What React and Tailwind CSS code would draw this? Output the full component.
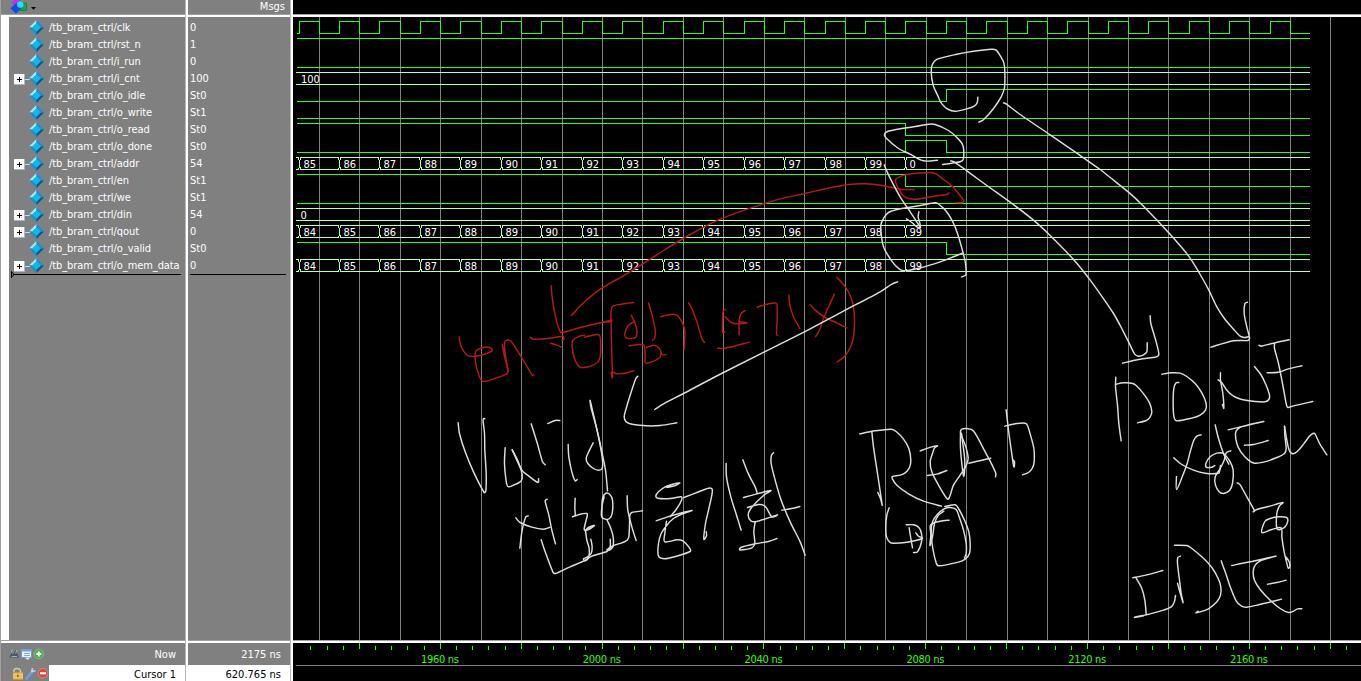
import React from "react";

const signals = [
  { name: "clk", value: "0" },
  { name: "rst_n", value: "1" },
  { name: "i_run", value: "0" },
  { name: "i_cnt", value: "100", bus: true },
  { name: "o_idle", value: "St0" },
  { name: "o_write", value: "St1" },
  { name: "o_read", value: "St0" },
  { name: "o_done", value: "St0" },
  { name: "addr", value: "54", bus: true },
  { name: "en", value: "St1" },
  { name: "we", value: "St1" },
  { name: "din", value: "54", bus: true },
  { name: "qout", value: "0", bus: true },
  { name: "o_valid", value: "St0" },
  { name: "o_mem_data", value: "0", bus: true },
];

// Falling clock edges (also the grid) and rising clock edges, in pixels.
const falls = [319, 359, 400, 440, 481, 521, 562, 602, 642, 683, 723, 764, 804, 845, 885, 926, 966, 1007, 1047, 1088, 1128, 1168, 1209, 1249, 1290, 1330];
const rises = [299, 339, 379, 420, 460, 501, 541, 582, 622, 663, 703, 744, 784, 825, 865, 905, 946, 986, 1027, 1067, 1108, 1148, 1189, 1229, 1270];
const END = 1310;

const clockPath = () => {
  let d = "M297 33.5";
  rises.forEach((r, i) => {
    d += `H${r + 0.5}V21.5H${falls[i] + 0.5}V33.5`;
  });
  return d + `H${END}`;
};

const levels = [
  "M297 38.5H1310",
  "M297 67.5H1310",
  "M297 101.5H946.5V89.5H1310",
  "M297 118.5H1310",
  "M297 123.5H905.5V135.5H1310",
  "M297 152.5H905.5V140.5H946.5V152.5H1310",
  "M297 174.5H905.5V186.5H1310",
  "M297 203.5H1310",
  "M297 242.5H946.5V254.5H1310",
];

const busPath = (y, changes) => {
  const t = y + 0.5;
  const b = y + 12.5;
  let d = "";
  let x = 296;
  changes.forEach((c) => {
    d += `M${x} ${t}H${c - 0.5}V${t + 2}M${x} ${b}H${c - 0.5}V${b - 2}M${c + 0.5} ${t + 2}V${b - 2}M${c + 1.5} ${t + 2.5}V${t}M${c + 1.5} ${b - 2.5}V${b}`;
    x = c + 1;
  });
  return d + `M${x} ${t}H${END}M${x} ${b}H${END}`;
};

const changes16 = rises.slice(0, 16);
const buses = [
  { y: 72, changes: [], labels: [[301, "100"]] },
  { y: 157, changes: changes16, labels: changes16.map((x, i) => [x + 4.4, i === 15 ? "0" : String(85 + i)]) },
  { y: 208, changes: [], labels: [[300.5, "0"]] },
  { y: 225, changes: changes16, labels: changes16.map((x, i) => [x + 4.4, String(84 + i)]) },
  { y: 259, changes: changes16, labels: changes16.map((x, i) => [x + 4.4, String(84 + i)]) },
];

// Pen strokes: each group has an origin and point lists in thirds of a pixel.
const white = [
  { o: [800, 0], s: [
    [533,291, 531,308, 522,318, 500,326, 465,333, 445,328, 425,311, 412,285, 399,255, 393,215, 397,192, 411,177, 470,162, 520,153, 575,147, 588,150, 601,168, 611,188, 614,215, 613,262, 603,290, 580,325, 550,359, 536,366],
    [610,308, 618,311, 660,343, 750,404, 830,459, 900,508, 930,532, 985,576, 1030,618, 1105,697, 1165,767, 1200,823, 1226,870, 1250,920, 1275,958, 1300,987, 1320,1008, 1332,1012, 1345,1010],
    [427,493, 455,489, 482,484, 490,475, 488,435, 470,412, 445,391, 405,373, 385,372, 345,379, 300,386, 262,394, 253,402, 257,413, 295,445, 330,462, 370,482, 412,480],
    [452,482, 462,485, 500,512, 560,556, 630,606, 700,660, 750,706, 820,778, 865,833, 892,870, 940,940, 970,995, 990,1035, 1003,1061, 1015,1068, 1030,1064, 1040,1055, 1041,1028],
    [252,494, 268,530, 300,590, 330,635, 361,682],
    [319,656, 335,667, 350,680, 361,682, 358,665, 354,650, 356,635],
    [484,830, 497,824, 496,790, 488,755, 472,700, 458,665, 437,632, 413,610, 403,608, 360,616, 300,626, 265,637, 250,655, 242,675, 244,710, 250,740, 265,768, 285,795, 310,812, 360,803, 420,785, 462,769, 487,759],
    [292,845, 275,852, 240,875, 120,938, 13,995, -230,1117, -350,1180, -405,1208, -436,1228],
  ]},
  { o: [440, 270], s: [
    [593,318, 587,325, 570,375, 558,415, 552,440, 558,455, 580,463, 620,467, 660,466, 710,458],
    [54,458, 58,490, 75,545, 100,605, 132,667, 137,662, 138,610, 134,540, 133,490, 129,455, 130,445, 134,446],
    [195,533, 193,580, 197,625, 203,649, 220,645, 239,636, 246,625, 243,600, 230,570, 216,539],
    [216,539, 230,565, 245,600, 265,617, 293,637, 295,626],
    [273,461, 290,515, 307,575, 315,584],
    [323,460, 345,451, 359,451],
    [384,523, 386,560, 395,605, 405,632, 411,628],
    [459,518, 448,540, 438,565, 443,580, 460,595, 475,600, 486,595, 487,570, 480,525, 465,455, 450,391],
    [450,391, 452,410, 472,485, 485,545, 496,600, 502,662],
    [227,743, 240,757, 275,771, 310,777, 330,771],
    [264,737, 257,740, 246,780, 239,834],
    [321,687, 315,693, 326,735, 335,780, 346,821],
    [405,684, 404,715, 405,735, 397,740, 420,732, 440,730, 441,738, 432,778, 445,778, 463,766, 445,772, 435,782],
    [485,710, 487,685, 496,670, 509,673, 517,690, 516,730, 508,745, 495,747, 484,738, 486,705, 492,680],
    [500,748, 512,775, 519,800, 519,828, 511,838, 500,839, 510,830, 510,807],
    [436,780, 440,810, 447,835, 446,860, 436,872, 430,866, 442,860, 453,850, 456,830, 452,807],
    [303,809, 315,845, 338,905, 346,910, 390,890, 432,872, 455,858, 500,844, 516,828, 545,818, 560,811, 566,800, 568,765, 569,735, 575,727, 607,722],
    [561,677, 563,720, 575,770, 588,811],
  ]},
  { o: [640, 270], s: [
    [80,652, 95,643, 119,638, 100,648, 80,651, 100,642, 75,650, 55,665, 47,677, 53,684, 90,685, 123,680, 124,690, 110,715, 90,740],
    [48,752, 90,738, 155,721, 125,732, 100,745, 80,765, 63,790, 55,820, 54,855, 62,864, 85,864, 150,844, 148,833, 128,812, 110,809, 74,815, 74,790, 79,753],
    [131,682, 165,669, 205,654, 216,657, 215,675, 205,720, 196,760, 191,807, 199,797, 198,785],
    [258,580, 259,620, 272,680, 290,738, 303,780],
    [308,569, 325,612, 345,650, 351,669],
    [310,682, 350,671, 392,661, 375,672, 350,695, 330,718, 324,735, 332,752, 350,754, 411,734, 395,740, 375,708, 355,703, 322,712],
    [345,755, 341,785, 344,820, 335,833, 315,838, 299,839, 302,832, 345,821, 385,814, 410,805],
    [400,548, 394,555, 393,580, 405,630, 423,690, 450,755, 480,815, 495,855],
    [425,720, 450,716, 479,709],
  ]},
  { o: [850, 380], s: [
    [29,161, 75,152, 123,147, 138,154, 160,177, 176,205, 182,240, 178,262, 165,278, 150,285, 127,289, 127,297, 140,315, 175,341, 220,363, 274,378],
    [65,154, 70,200, 82,280, 96,374, 91,355, 83,337],
    [210,212, 235,203, 262,197, 253,203, 247,220, 240,245, 245,275, 265,315, 292,357, 300,345, 310,315, 330,285, 347,258, 354,235, 347,200, 335,170, 331,155, 335,147, 350,145, 367,150, 380,168, 405,215, 426,255, 437,280, 436,290],
    [232,286, 260,282, 290,271],
    [331,155, 331,205, 336,260, 341,288, 344,245, 338,190, 334,160],
    [356,249, 395,240, 422,234],
    [468,89, 475,150, 484,215, 491,260, 493,245, 487,238],
    [464,138, 500,130, 525,129, 532,136, 541,165, 551,205, 552,245, 546,265, 535,277, 517,284],
    [117,383, 110,405, 107,440, 109,470, 119,486, 130,489, 170,486, 216,475, 205,468, 197,458],
    [168,434, 190,434, 206,442, 214,460, 214,485, 202,515, 190,517],
    [177,443, 182,475, 187,503],
    [284,379, 315,374, 325,385, 343,420, 356,455, 360,490, 358,520, 345,537, 325,546, 265,557, 257,545, 248,505, 243,460, 247,425, 262,402, 282,386, 300,382, 318,388, 327,410, 340,450, 348,490, 348,520, 343,533],
    [297,420, 270,423, 247,430, 240,438, 242,465, 239,496, 247,470, 253,430, 265,405, 281,393],
  ]},
  { o: [1100, 290], s: [
    [150,77, 152,100, 168,155, 176,190, 174,197, 165,201, 115,208, 67,219],
    [442,36, 434,41, 432,70, 440,110, 448,143, 443,151, 400,152, 332,171],
    [47,261, 46,290, 52,345, 56,400, 63,452],
    [48,282, 70,278, 95,279, 108,286, 128,308, 148,338, 155,365, 150,380, 138,391, 112,398],
    [185,252, 215,248, 240,249, 260,259, 285,280, 305,308, 318,340, 316,360, 300,375, 275,384, 229,392, 221,378, 219,335, 221,295, 228,278, 236,277],
    [361,248, 361,270, 368,310, 371,354, 367,343],
    [354,269, 365,278, 380,300, 400,318, 425,328, 465,334, 495,335, 506,328, 508,315, 497,283, 482,253, 463,229],
    [476,165, 483,168, 520,159, 567,149],
    [523,160, 523,175, 535,220, 547,280, 558,340, 563,352, 580,347, 638,334],
    [501,248, 535,246, 565,236, 605,227],
    [384,419, 430,408, 491,394, 430,408, 412,417, 406,430, 410,460, 422,485, 445,510, 462,519, 490,516, 530,502, 553,490, 558,475, 554,435, 553,408],
    [433,465, 460,463, 504,451],
    [553,408, 560,450, 567,480, 578,491, 592,483, 610,462, 627,439, 638,430, 645,432, 660,463, 680,494],
    [303,434, 291,437, 281,450, 270,485, 261,520, 245,563, 229,598, 229,559],
    [221,503, 245,523, 280,540, 315,549, 355,549, 359,540, 361,526],
    [345,404, 355,445, 370,490, 386,522],
    [344,526, 335,531, 318,531, 318,518, 330,500, 350,489, 370,490, 390,515, 399,540, 397,580, 388,601, 370,610, 357,605, 346,585, 345,560, 360,535, 372,510, 378,488, 392,482],
  ]},
  { o: [1100, 440], s: [
    [411,128, 420,134, 440,170, 463,212, 459,215, 470,208, 505,199, 548,187, 538,197, 530,220, 530,265, 540,268, 555,260, 563,242, 559,232, 535,230, 510,235, 494,244, 485,277, 515,268, 543,263, 545,290, 552,335, 559,365, 564,384, 569,380, 567,365, 557,350],
    [98,413, 140,404, 188,391],
    [108,414, 125,445, 134,480, 138,521],
    [103,532, 130,527, 104,531, 150,521, 190,510, 212,501, 222,487, 226,466],
    [241,348, 233,352, 232,370, 238,420, 243,460, 249,488, 241,462, 232,429],
    [223,315, 260,316, 275,325, 305,350, 335,382, 354,415, 362,440, 361,465, 350,485, 325,506, 288,518, 294,513],
    [363,362, 375,395, 392,445, 408,482, 424,498, 440,501, 475,494, 544,477],
    [395,376, 450,365, 527,348, 485,360, 465,375, 459,395, 463,420, 480,448, 510,480, 540,505, 565,517, 580,513, 592,506, 605,506],
    [502,432, 530,427, 558,420],
  ]},
];

const red = [
  { o: [800, 0], s: [
    [342,568, 300,567, 260,559, 220,552, 180,551, 130,555, 80,565, 0,583, -60,596, -120,614, -240,657, -330,703, -405,748, -502,810, -550,838, -600,867, -650,908, -686,946],
    [447,578, 440,583, 410,587, 350,597, 325,595, 308,585, 295,565, 286,545, 288,536, 305,527, 340,520, 375,518, 403,519, 430,538, 457,559, 475,580, 491,602, 486,607, 466,608],
    [110,831, 135,860, 150,885, 160,920, 163,965, 160,1010, 153,1035, 135,1067, 111,1085],
  ]},
  { o: [440, 270], s: [
    [57,200, 60,220, 70,243, 85,257, 110,258, 140,250, 156,241, 151,233, 135,231, 115,237, 106,245, 106,275, 113,305, 127,333, 160,326, 200,311, 203,300, 192,255, 186,222, 193,255, 205,302, 198,270, 193,230, 195,213, 207,210, 217,219, 245,263, 277,316, 281,314],
    [333,47, 337,90, 346,140, 358,180, 367,187, 420,172, 514,150, 485,157, 514,154],
    [270,201, 280,207, 325,205, 367,198, 371,207, 365,211],
    [331,219, 350,225, 365,231],
    [433,195, 415,199, 398,210, 396,230, 403,265, 418,290, 440,291, 463,283, 478,268, 482,235, 479,197, 470,193, 433,201],
    [581,97, 545,102, 515,112, 513,160, 514,220, 517,322, 514,305, 530,311, 555,309, 581,302],
    [573,135, 583,155, 590,180, 588,200, 575,205, 557,202, 554,190, 562,169, 575,158, 584,155],
    [625,98, 637,140, 645,180, 644,203, 637,210],
    [567,227, 600,223, 612,226, 615,250, 615,277, 625,278, 655,265, 663,250, 656,233, 640,225, 619,232],
    [663,248, 668,254, 677,253],
  ]},
  { o: [640, 270], s: [
    [61,140, 90,133, 110,135, 125,155, 134,180, 132,238],
    [145,98, 155,115, 170,155, 185,205, 193,217],
    [256,118, 249,122, 247,155, 247,187, 254,185],
    [255,140, 270,155, 290,161, 320,158, 298,155],
    [315,121, 303,130, 297,150, 297,194],
    [233,234, 255,234, 328,216],
    [351,111, 380,102, 408,99, 411,110, 411,145, 409,193, 413,196],
    [446,75, 449,105, 460,140, 479,175],
    [510,103, 525,120, 555,142, 590,158, 620,173],
    [583,72, 572,95, 550,145, 538,180, 526,200],
  ]},
];

// Smooths a flat list of points into cubic segments.
const smooth = ([ox, oy], p) => {
  const n = p.length / 2;
  const at = (i) => {
    const k = Math.max(0, Math.min(n - 1, i));
    return [ox + (p[2 * k] + 0.5) / 3, oy + (p[2 * k + 1] + 0.5) / 3];
  };
  const f = (v) => v.toFixed(2);
  let d = `M${f(at(0)[0])} ${f(at(0)[1])}`;
  for (let i = 0; i < n - 1; i++) {
    const a = at(i - 1), b = at(i), c = at(i + 1), e = at(i + 2);
    const len = Math.hypot(c[0] - b[0], c[1] - b[1]);
    const t1 = Math.hypot(c[0] - a[0], c[1] - a[1]) || 1;
    const t2 = Math.hypot(e[0] - b[0], e[1] - b[1]) || 1;
    const k1 = Math.min(1 / 6, (len * 0.35) / t1);
    const k2 = Math.min(1 / 6, (len * 0.35) / t2);
    d += `C${f(b[0] + (c[0] - a[0]) * k1)} ${f(b[1] + (c[1] - a[1]) * k1)} ${f(c[0] - (e[0] - b[0]) * k2)} ${f(c[1] - (e[1] - b[1]) * k2)} ${f(c[0])} ${f(c[1])}`;
  }
  return d;
};

const Ink = ({ groups, color }) => (
  <g fill="none" stroke={color} strokeWidth="1.45" strokeLinecap="round" strokeLinejoin="round">
    {groups.flatMap((g, i) => g.s.map((p, j) => <path key={`${i}-${j}`} d={smooth(g.o, p)} />))}
  </g>
);

const Waves = () => (
  <svg className="block h-[623px] w-[1068px]" viewBox="293 17 1068 623">
    <g fill="#808080" shapeRendering="crispEdges">
      {falls.map((x) => <rect key={x} x={x} y="17" width="1" height="623" />)}
    </g>
    <g fill="none" stroke="#33ff00" shapeRendering="crispEdges">
      <path d={clockPath()} />
      {levels.map((d) => <path key={d} d={d} />)}
    </g>
    {buses.map((b) => (
      <g key={b.y}>
        <path d={busPath(b.y, b.changes)} fill="none" stroke="#b3ffb3" shapeRendering="crispEdges" />
        {b.labels.map(([x, t]) => (
          <text key={x} x={x} y={b.y + 11} fill="#ffffff" fontSize="11" fontFamily="'DejaVu Sans Condensed', 'DejaVu Sans', sans-serif">{t}</text>
        ))}
      </g>
    ))}
    <Ink groups={red} color="#b51a17" />
    <Ink groups={white} color="#dedede" />
  </svg>
);

const Ruler = () => {
  const ticks = [];
  for (let k = -3; k <= 62; k++) ticks.push(k);
  return (
    <svg className="block h-[38px] w-[1068px]" viewBox="293 643 1068 38">
      <g fill="#33ff00" shapeRendering="crispEdges">
        {ticks.map((k) => {
          const major = k % 5 === 0;
          return <rect key={k} x={Math.floor(359.4 + k * 16.18)} y={major ? 643 : 646} width="1" height={major ? 6 : 4} />;
        })}
      </g>
      <rect x="296" y="665" width="1065" height="1" fill="#808080" />
      {[1960, 2000, 2040, 2080, 2120, 2160].map((t, i) => (
        <text key={t} x={440 + i * 161.8} y="663" textAnchor="middle" textLength="38" fill="#33ff00" fontSize="11" fontFamily="'DejaVu Sans Condensed', 'DejaVu Sans', sans-serif">{t} ns</text>
      ))}
    </svg>
  );
};

const Diamond = () => (
  <svg className="block h-[15px] w-[15px]" viewBox="0 0 15 15">
    <path d="M7.5 0L0 7.5L3.5 7.5L7.5 3.5Z" fill="#a9e6fa" />
    <path d="M7.5 0L15 7.5L11.5 7.5L7.5 3.5Z" fill="#1c8fd0" />
    <path d="M0 7.5L7.5 15L7.5 11.5L3.5 7.5Z" fill="#1690d6" />
    <path d="M15 7.5L7.5 15L7.5 11.5L11.5 7.5Z" fill="#045a86" />
    <path d="M7.5 3.2L11.8 7.5L7.5 11.8L3.2 7.5Z" fill="#00bdf2" />
  </svg>
);

const Expander = () => (
  <svg className="block h-[11px] w-4" viewBox="0 0 16 11" shapeRendering="crispEdges">
    <rect x="11" y="5" width="5" height="1" fill="#d0d8dc" />
    <rect x="0" y="0" width="11" height="11" fill="#a5b4cf" />
    <rect x="0" y="0" width="10" height="10" fill="#ffffff" />
    <rect x="3" y="5" width="5" height="1" fill="#000" />
    <rect x="5" y="3" width="1" height="5" fill="#000" />
  </svg>
);

const HeaderIcon = () => (
  <svg className="block h-[14px] w-[28px]" viewBox="10 0 28 14">
    <path d="M11.5 3L14.5 0H21L15 5Z" fill="#c42fe0" />
    <rect x="20" y="3" width="6.5" height="7.5" fill="#17a34a" stroke="#0a6b2c" strokeWidth=".6" />
    <path d="M16 3L21.5 8.2L16 13.8L10.5 8.2Z" fill="#0a4fe6" />
    <circle cx="20.3" cy="4.6" r="3.2" fill="#22e0f5" />
    <path d="M31 7H36L33.5 9.8Z" fill="#000" />
  </svg>
);

const NowIcons = () => (
  <svg className="block h-[12px] w-[36px]" viewBox="9 648 36 12">
    <path d="M9.5 657.5L11.5 652.5L13 655L15.5 650L19 657.5Z" fill="#44586c" />
    <path d="M11 652.5L12.5 649.5M15.5 653.5L17 650M11.5 656.5H17" stroke="#b9c6d2" fill="none" strokeWidth=".8" />
    <rect x="21.5" y="649.5" width="10" height="8" fill="#e9f2fb" stroke="#6c9bd2" />
    <rect x="21" y="649" width="11" height="2.5" fill="#72a5df" />
    <path d="M24 653.5H30M24 655.5H30" stroke="#8bacd2" />
    <path d="M25 658L28 660L30 657Z" fill="#dbe8f5" />
    <circle cx="38.8" cy="654" r="4.7" fill="#48b042" stroke="#8ed384" strokeWidth=".6" />
    <path d="M36.3 654H41.3M38.8 651.5V656.5" stroke="#fff" strokeWidth="1.8" />
  </svg>
);

const CursorIcons = () => (
  <svg className="block h-[13px] w-[37px]" viewBox="11 667 37 13">
    <path d="M14 672V670.5C14 668.3 19.5 667.3 20.5 670.5V673" fill="none" stroke="#dccb93" strokeWidth="1.4" />
    <rect x="13" y="672.5" width="10" height="7" fill="#edb246" />
    <path d="M13 674.5H23M13 677H23" stroke="#f7d993" strokeWidth=".8" />
    <rect x="17" y="674.5" width="1.5" height="2.5" fill="#8a6420" />
    <path d="M26.5 678.5L32.5 671.5" stroke="#6c9ce2" strokeWidth="2.8" strokeLinecap="round" />
    <path d="M32.5 668L31.8 671.5L35.5 670.8" fill="none" stroke="#bdd3f0" strokeWidth="1.6" />
    <circle cx="43" cy="673.2" r="4.8" fill="#e0453d" stroke="#f09a92" strokeWidth=".6" />
    <rect x="40" y="672.3" width="6" height="2" fill="#fff" />
  </svg>
);

const HRule = () => (
  <div className="h-[3px] shrink-0 border-t border-[#a0a0a0] bg-white" />
);

const VRule = () => (
  <div className="h-full w-[3px] shrink-0 border-l border-[#b8b8b8] bg-white" />
);

export default function App() {
  return (
    <div className="flex h-[681px] w-[1361px] overflow-hidden bg-[#808080] font-['DejaVu_Sans_Condensed','DejaVu_Sans',sans-serif] text-[11px] leading-[17px] text-white">
      <div className="w-px shrink-0 bg-[#a0a0a0]" />
      <div className="flex w-[184px] shrink-0 flex-col">
        <div className="h-[14px] pl-[9px]"><HeaderIcon /></div>
        <HRule />
        <div className="flex h-[623px]">
          <div className="w-2 shrink-0 bg-white" />
          <div className="flex grow flex-col pt-[2px]">
            {signals.map((s) => (
              <div key={s.name} className="flex h-[17px] items-center whitespace-nowrap">
                <div className="ml-[5px] w-4 pt-[2px]">{s.bus && <Expander />}</div>
                <div className="-ml-px"><Diamond /></div>
                <span className="ml-[5px] tracking-[-0.08px]">/tb_bram_ctrl/{s.name}</span>
              </div>
            ))}
            <svg className="-mt-[3px] ml-[2px] block h-2 w-[170px] overflow-visible" viewBox="11 271 170 8">
              <path d="M11.5 271.5V277.5L14 274.5Z" fill="none" stroke="#000" />
              <rect x="13" y="274" width="168" height="1" fill="#000" />
            </svg>
          </div>
        </div>
        <HRule />
        <div className="flex h-[22px] items-center justify-between pl-2 pr-[9px]">
          <NowIcons />
          <span>Now</span>
        </div>
        <div className="flex h-4 items-center">
          <div className="flex h-4 w-12 shrink-0 items-center pl-[10px]"><CursorIcons /></div>
          <div className="h-4 grow bg-white pr-[9px] pt-px text-right text-black">Cursor 1</div>
        </div>
      </div>
      <VRule />
      <div className="flex w-[102px] shrink-0 flex-col">
        <div className="h-[14px] pr-[5px] text-right leading-[13px]">Msgs</div>
        <HRule />
        <div className="flex h-[623px] flex-col pt-[2px]">
          {signals.map((s) => (
            <div key={s.name} className="h-[17px] pl-[2px]">{s.value}</div>
          ))}
          <div className="ml-[2px] h-px w-24 bg-black" />
        </div>
        <HRule />
        <div className="h-[22px] pr-[9px] text-right leading-[23px]">2175 ns</div>
        <div className="h-4 bg-white pr-[9px] pt-px text-right text-black">620.765 ns</div>
      </div>
      <VRule />
      <div className="flex w-[1068px] shrink-0 flex-col bg-black">
        <div className="h-[14px]" />
        <HRule />
        <Waves />
        <HRule />
        <Ruler />
      </div>
    </div>
  );
}
